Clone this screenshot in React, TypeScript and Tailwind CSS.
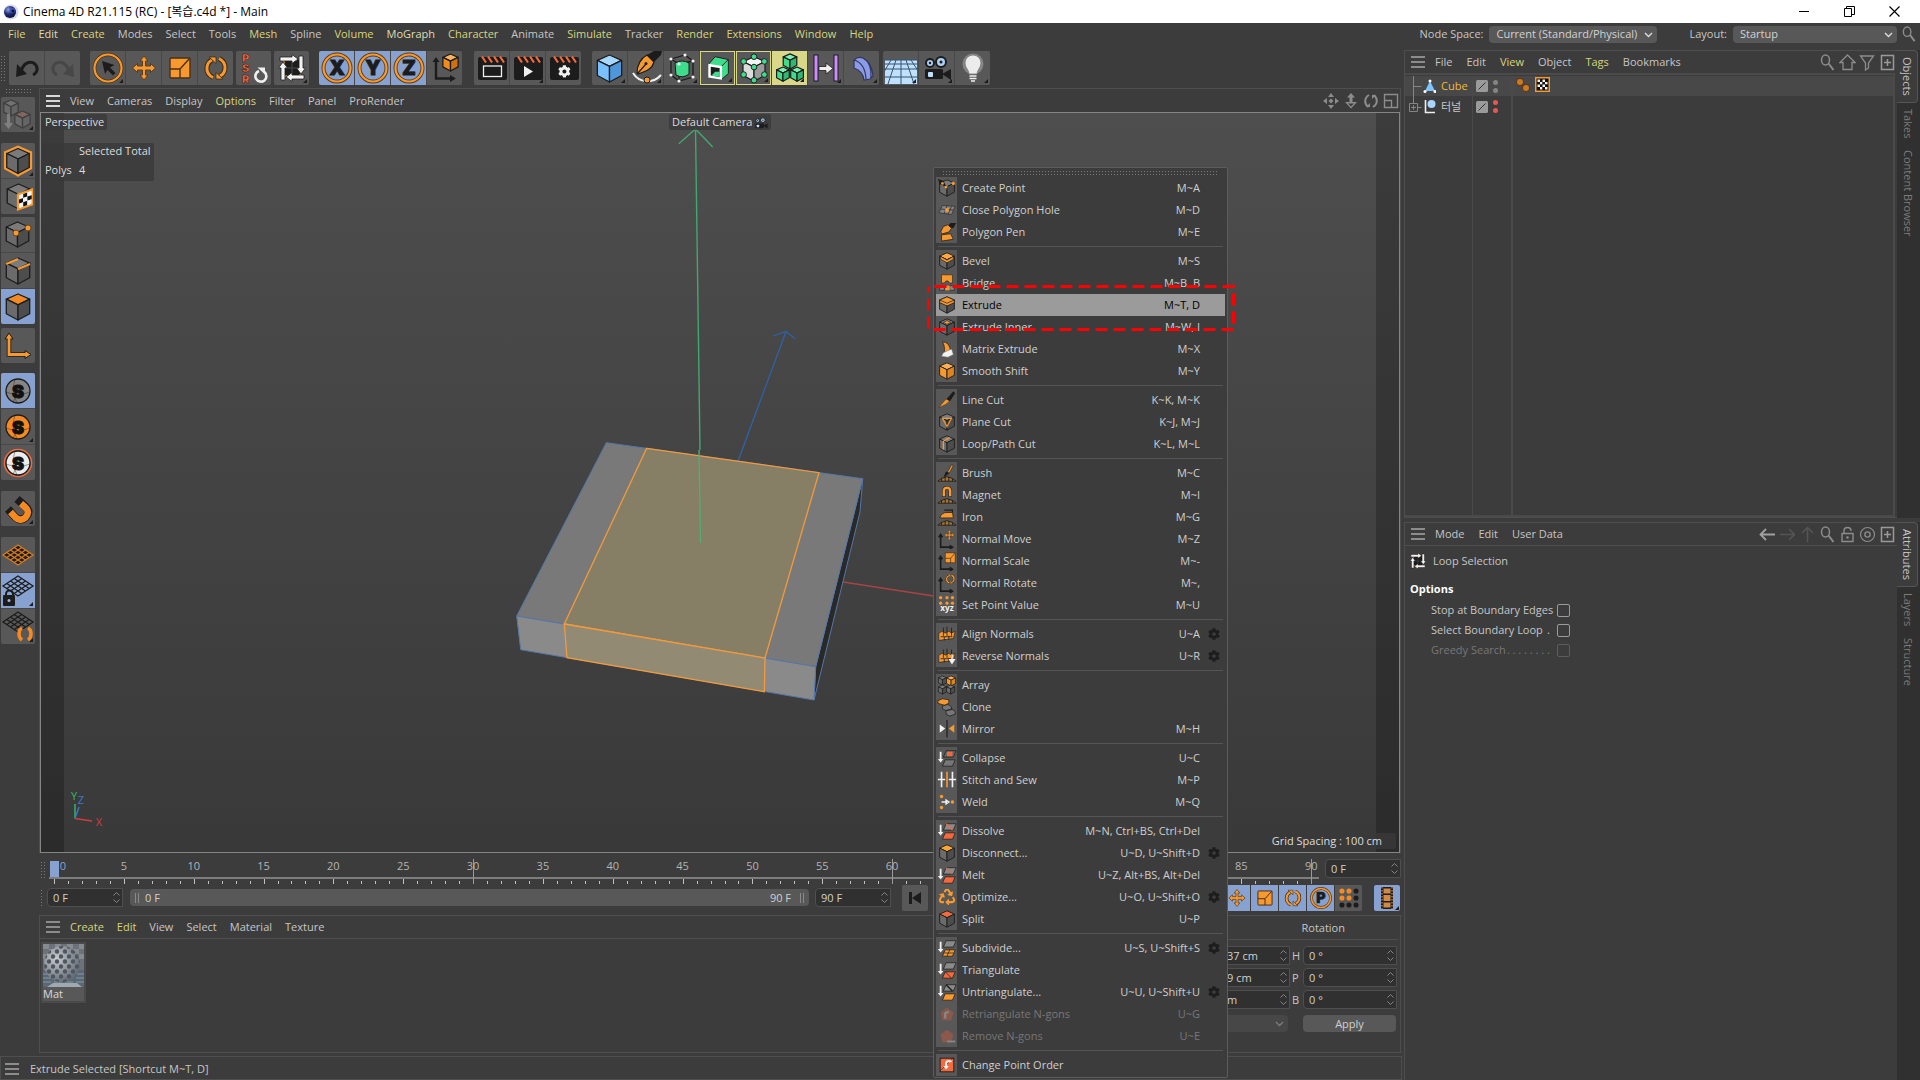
import React from 'react';
import type { ReactNode } from 'react';
import { FaCog, FaRecycle } from 'react-icons/fa';

const O = '#f7992f';
const K = '#1c1c1c';
const G = '#3fdc8b';
const R = '#f26a3d';

/* ---------- shared drawings, 34 x 34 ---------- */

function Svg({ children, size = 34, box = 34 }: { children: ReactNode; size?: number; box?: number }) {
  return (
    <svg width={size} height={size} viewBox={`0 0 ${box} ${box}`} fill="none" aria-hidden="true">
      {children}
    </svg>
  );
}

function Iso({ x = 5, y = 5, s = 24, top = '#7b7b7b', left = '#6b6b6b', right = '#4d4d4d', line = K, w = 1.3 }: {
  x?: number; y?: number; s?: number; top?: string; left?: string; right?: string; line?: string; w?: number;
}) {
  const p = (a: number, b: number) => `${x + a * s},${y + b * s}`;
  return (
    <g stroke={line} strokeWidth={w} strokeLinejoin="round">
      <polygon points={`${p(0.5, 0)} ${p(0.95, 0.2)} ${p(0.5, 0.42)} ${p(0.05, 0.2)}`} fill={top} />
      <polygon points={`${p(0.05, 0.2)} ${p(0.5, 0.42)} ${p(0.5, 1)} ${p(0.05, 0.76)}`} fill={left} />
      <polygon points={`${p(0.95, 0.2)} ${p(0.5, 0.42)} ${p(0.5, 1)} ${p(0.95, 0.76)}`} fill={right} />
    </g>
  );
}

const MovePath = () => (
  <path
    d="M17 5l4 5h-2.500v5h5v-2.500l5 4.500-5 4.500v-2.500h-5v5h2.500L17 29l-4-5h2.500v-5h-5v2.500L5.500 17l5-4.500v2.500h5v-5H13z"
    fill={O} stroke="#5b3c1a" strokeWidth="1" />
);
const ScalePath = () => (
  <g stroke="#4a3016" strokeWidth="1.400">
    <rect x="7" y="7" width="20" height="20" rx="1" fill={O} />
    <path d="M7 18h10v9M17 18L27 7" />
  </g>
);
const RotatePath = () => (
  <g>
    <path d="M14 26.500C9 24 7.500 20 8 16c.4-3 2-5.500 5-7" stroke="#3b2a18" strokeWidth="5" />
    <path d="M20 7.500c5 2.500 6.500 6.500 6 10.500-.4 3-2 5.500-5 7" stroke="#3b2a18" strokeWidth="5" />
    <path d="M14 26.500C9 24 7.500 20 8 16c.4-3 2-5.500 5-7" stroke={O} strokeWidth="3" />
    <path d="M20 7.500c5 2.500 6.500 6.500 6 10.500-.4 3-2 5.500-5 7" stroke={O} strokeWidth="3" />
    <path d="M10 6h7v6.500zM24 28h-7v-6.500z" fill={O} stroke="#3b2a18" strokeWidth=".8" />
  </g>
);
const LoopPath = () => (
  <g>
    <rect x="9" y="9" width="16" height="16" fill={K} stroke={O} strokeWidth="1.500" strokeDasharray="3 2" />
    <path d="M17 9v16M9 17h16" stroke="#4a4a4a" strokeWidth="1" />
    <g fill="#f2f2f2" stroke={K} strokeWidth=".8">
      <path d="M5 6h12V3.500l6 4.500-6 4.500V10H5z" />
      <path d="M28 5v12h2.500L26 23l-4.500-6H24V5z" />
      <path d="M29 28H17v2.500L11 26l6-4.500V24h12z" />
      <path d="M6 29V17H3.500L8 11l4.500 6H10v12z" />
    </g>
  </g>
);
const AxisLetter = ({ c }: { c: string }) => (
  <g>
    <circle cx="17" cy="17" r="13.500" stroke="#5b3c1a" strokeWidth="4" />
    <circle cx="17" cy="17" r="13.500" stroke={O} strokeWidth="2.200" />
    <text x="17" y="24" textAnchor="middle" fontSize="20" fontWeight="900" fill={K} stroke={K} strokeWidth=".8" fontFamily="Inter, sans-serif">{c}</text>
  </g>
);
const Clap = ({ children }: { children: ReactNode }) => (
  <g>
    <rect x="3" y="6" width="29" height="23" rx="2" fill={K} />
    <path d="M7 5.500l4 6M13 5.500l4 6M19 5.500l4 6M25 5.500l4 6" stroke={R} strokeWidth="2.200" />
    {children}
  </g>
);
const Camera = () => (
  <g>
    <circle cx="10" cy="12" r="4" fill="#a9d0f5" stroke={K} strokeWidth="2" />
    <circle cx="21" cy="11" r="5" fill="#a9d0f5" stroke={K} strokeWidth="2" />
    <circle cx="10" cy="12" r="1.200" fill={K} />
    <circle cx="21" cy="11" r="1.500" fill={K} />
    <rect x="5" y="18" width="18" height="10" rx="1.500" fill={K} />
    <path d="M22 23l9-5v11z" fill={K} />
    <rect x="8" y="21" width="5" height="5" rx="1" fill="#bfe0ff" />
  </g>
);
const Checks = ({ x, y, s, n = 4 }: { x: number; y: number; s: number; n?: number }) => (
  <g>
    {Array.from({ length: n * n }, (_, i) => {
      const c = i % n;
      const r = Math.floor(i / n);
      return <rect key={i} x={x + c * s} y={y + r * s} width={s} height={s} fill={(c + r) % 2 ? '#111' : '#f5f5f5'} />;
    })}
  </g>
);
const GridPlane = ({ c, y = 0 }: { c: string; y?: number }) => (
  <g stroke={c} strokeWidth="1.300" transform={`translate(0 ${y})`}>
    <path d="M17 7L32 17L17 27L2 17Z" />
    <path d="M13.200 9.500l15 10M9.500 12l15 10M5.800 14.500l15 10M20.800 9.500l-15 10M24.500 12l-15 10M28.200 14.500l-15 10" />
  </g>
);
const Axes = () => (
  <g>
    <path d="M8 9v18.500h15" stroke={K} strokeWidth="2.400" />
    <path d="M4.500 11L8 6l3.500 5zM22 24l6 3.500-6 3.500z" fill={K} />
  </g>
);
const SnapS = ({ fill, ring }: { fill: string; ring?: string }) => (
  <g>
    {ring && <circle cx="17" cy="17" r="13.500" stroke={ring} strokeWidth="1.600" />}
    <circle cx="17" cy="17" r="12" fill={fill} stroke={K} strokeWidth="1.300" />
    <path d="M5 18q12 5 24 0M14 5q-4 12 2 24M12 28q4-6 4-11" stroke={K} strokeOpacity=".4" />
    <text x="17" y="23.500" textAnchor="middle" fontSize="18" fontWeight="900" fill="#111" stroke="#111" strokeWidth="1" fontFamily="Inter, sans-serif">S</text>
  </g>
);

/* ---------- toolbars ---------- */

type Tool = { name: string; icon: ReactNode; on?: boolean; corner?: boolean; tint?: 'frame' | 'fill'; dim?: boolean };

const topGroups: { gap: string; tools: Tool[] }[] = [
  { gap: 'mr-2.5', tools: [
    { name: 'Undo', icon: <g><path d="M11 21C13 12 20 9 25 13c4 4 2 9-2 11" stroke={K} strokeWidth="3" /><path d="M6 26l1-13 10 10z" fill={K} /></g> },
    { name: 'Redo', icon: <g><path d="M23 21C21 12 14 9 9 13c-4 4-2 9 2 11" stroke="#474747" strokeWidth="3" /><path d="M28 26l-1-13-10 10z" fill="#474747" /></g> },
  ] },
  { gap: 'mr-[3px]', tools: [
    { name: 'Live Selection', corner: true, icon: <g><circle cx="17" cy="17" r="13.500" stroke="#4a3016" strokeWidth="3.500" /><circle cx="17" cy="17" r="13.500" stroke={O} strokeWidth="2.200" /><path d="M11 10l3 13 2.500-4 5.500 5.500 2.500-2.500-5.500-5.500 4.500-2.500z" fill={K} /></g> },
    { name: 'Move', icon: <MovePath /> },
    { name: 'Scale', icon: <ScalePath /> },
    { name: 'Rotate', icon: <RotatePath /> },
  ] },
  { gap: 'mr-[3px]', tools: [
    { name: 'Reset PSR', icon: (
      <g>
        <g fontSize="11" fontWeight="900" fill={R} stroke={K} strokeWidth=".5" fontFamily="Inter, sans-serif">
          <text x="5" y="11">P</text><text x="5" y="21">S</text><text x="5" y="32">R</text>
        </g>
        <path d="M22 20a5.500 5.500 0 1 0 5.500 1" stroke="#f0f0f0" strokeWidth="2.600" /><path d="M20.500 16.500h7.500v7z" fill="#f0f0f0" />
      </g>
    ) },
  ] },
  { gap: 'mr-2.5', tools: [{ name: 'Loop Selection', corner: true, icon: <LoopPath /> }] },
  { gap: 'mr-3', tools: [
    { name: 'X-Axis', on: true, icon: <AxisLetter c="X" /> },
    { name: 'Y-Axis', on: true, icon: <AxisLetter c="Y" /> },
    { name: 'Z-Axis', on: true, icon: <AxisLetter c="Z" /> },
    { name: 'Coordinate System', icon: <g><Axes /><Iso x={14} y={3} s={17} top="#ffb45c" left="#f28a1c" right="#cf7012" /></g> },
  ] },
  { gap: 'mr-[11px]', tools: [
    { name: 'Render View', icon: <Clap><rect x="8.500" y="15" width="18" height="10.500" stroke="#f0f0f0" strokeWidth="1.300" /></Clap> },
    { name: 'Render to Picture Viewer', corner: true, icon: <Clap><path d="M13 15v11l9-5.500z" fill="#f0f0f0" /></Clap> },
    { name: 'Edit Render Settings', icon: <Clap><g transform="translate(11 14) scale(.025)"><FaCog size={512} color="#f0f0f0" /></g></Clap> },
  ] },
  { gap: 'mr-1', tools: [
    { name: 'Cube', corner: true, icon: <Iso x={3} y={4} s={27} top="#a5d7ff" left="#78c0ff" right="#4f97d8" /> },
    { name: 'Pen', corner: true, icon: <g><path d="M18 4l7-4h8l-1 4-7 7z" fill={K} /><path d="M8 22C8 14 12 7 18 4l7 7c-2 7-7 9-16 12zM9 22l8-9" fill={O} stroke={K} strokeWidth="1.200" /><circle cx="17" cy="12.500" r="1.500" fill={K} /><path d="M4 22c6 10 20 11 28 2" stroke="#f0f0f0" strokeWidth="2" /><circle cx="18" cy="29" r="3" fill={O} stroke={K} /></g> },
    { name: 'Subdivision Surface', corner: true, icon: <g><path d="M6 8L20 4l8 6v16l-14 4-8-6zM6 8l8 5 14-3M14 13v17" stroke={K} strokeWidth="1.300" /><path d="M10 12q7-4 14 0v11q-6 5-13 1z" fill={G} stroke={K} />{[[6, 8], [20, 4], [28, 10], [28, 26], [14, 30], [6, 24], [14, 13]].map(([a, b]) => <circle key={`${a}-${b}`} cx={a} cy={b} r="1.600" fill="#f5f5f5" />)}</g> },
    { name: 'Extrude', corner: true, tint: 'frame', icon: <g><path d="M7 13l7-8 14 3v15l-7 6z" fill={G} stroke={K} /><path d="M21 15l7-7" stroke={K} /><path d="M8 14l12 2v12L8 26z" fill={K} stroke="#fff" strokeWidth="2.600" /><path d="M10 25l4-4h5v5.500z" fill={G} /></g> },
    { name: 'Volume Builder', corner: true, tint: 'frame', icon: <g><Iso x={4} y={5} s={26} top="#f5f5f5" left="#dcdcdc" right="#9b9b9b" />{[[17, 5], [6, 10], [28, 10], [17, 16], [6, 24], [28, 24], [17, 30]].map(([a, b], i) => <circle key={i} cx={a} cy={b} r="3" fill={G} stroke={K} />)}</g> },
    { name: 'MoGraph Cloner', corner: true, tint: 'fill', icon: <g><Iso x={9} y={2} s={16} top="#7bf0b3" left="#3fdc8b" right="#2fb872" /><Iso x={2} y={16} s={15} top="#7bf0b3" left="#3fdc8b" right="#2fb872" /><Iso x={17} y={16} s={15} top="#7bf0b3" left="#3fdc8b" right="#2fb872" /></g> },
    { name: 'Fields', corner: true, icon: <g><rect x="5" y="4" width="4" height="26" fill="#cf8cff" stroke={K} /><rect x="25" y="4" width="4" height="26" fill="#cf8cff" stroke={K} /><path d="M10 15.500h7V12l7 5.500-7 5.500v-3.500h-7z" fill="#f0f0f0" stroke={K} strokeWidth=".8" /></g> },
    { name: 'Bend', corner: true, icon: <path d="M9 9q4-4 9-2 9 5 10 18l-3 3-6 1Q18 20 9 17zM9 9q11 3 12 19M18 7q9 5 8 20" fill="#8c9be8" stroke="#30365c" strokeWidth="1.200" /> },
  ] },
  { gap: '', tools: [
    { name: 'Floor', corner: true, icon: <g><rect x="1" y="9" width="32" height="24" fill="#bfe0ff" /><path d="M0 9h34M0 13h34M0 18h34M0 26h34M17 9v24M12 9L4 33M22 9l8 24M7 9L-3 26M27 9l11 17" stroke="#39536e" strokeWidth="1" /></g> },
    { name: 'Camera', corner: true, icon: <Camera /> },
    { name: 'Light', corner: true, icon: <g><circle cx="17" cy="13" r="10.500" fill="#fff" fillOpacity=".28" /><path d="M13 23c0-4-4-6-4-11a8 8 0 0 1 16 0c0 5-4 7-4 11z" fill="#ececec" stroke="#777" strokeWidth=".8" /><path d="M13.500 25h7M13.500 27.500h7M15 30h4" stroke="#efefef" strokeWidth="1.600" /></g> },
  ] },
];

const sideGroups: { gap: string; tools: Tool[] }[] = [
  { gap: 'mb-[11px]', tools: [{ name: 'Make Editable', corner: true, dim: true, icon: <g><Iso x={2} y={2} s={16} top="#999" left="#888" right="#777" /><Iso x={13} y={13} s={17} top="#c77d64" left="#888" right="#777" /><path d="M6 16v9H3l4.500 6 4.500-6H9v-9z" fill="#bbb" /></g> }] },
  { gap: 'mb-[3px]', tools: [
    { name: 'Model', corner: true, icon: <g><Iso x={3} y={3} s={28} line={O} w={3} /><Iso x={4.5} y={4.5} s={25} /></g> },
    { name: 'Texture', icon: <g><Iso x={5} y={4} s={25} /><g transform="matrix(1 -.35 0 1 17 14.500)"><rect width="14" height="15" fill="#fff" stroke={O} strokeWidth="2.200" /><Checks x={1} y={1.2} s={4.2} n={3} /></g></g> },
  ] },
  { gap: 'mb-[4px]', tools: [
    { name: 'Points', icon: <g><Iso x={4} y={4} s={25} /><circle cx="15" cy="15" r="3" fill={O} stroke="#6b4215" /><circle cx="27" cy="10" r="3" fill={O} stroke="#6b4215" /></g> },
    { name: 'Edges', icon: <g><Iso x={4} y={4} s={26} /><path d="M5 10l12-5M17 15l12-5" stroke={O} strokeWidth="2" /></g> },
    { name: 'Polygons', on: true, icon: <Iso x={4} y={4} s={26} top="#f58a22" /> },
  ] },
  { gap: 'mb-[10px]', tools: [{ name: 'Enable Axis', icon: <g><path d="M8 9v16.500h17" stroke={K} strokeWidth="4.500" /><path d="M4 10l4-6 4 6zM24 21.500l6 4-6 4z" fill={O} stroke={K} /><path d="M8 9v16.500h17" stroke={O} strokeWidth="2.800" /></g> }] },
  { gap: 'mb-[11px]', tools: [
    { name: 'Enable Snap', on: true, icon: <SnapS fill="#858585" /> },
    { name: 'Snap Settings', corner: true, icon: <SnapS fill="#f58a22" /> },
    { name: 'Viewport Solo', icon: <SnapS fill="#ececec" ring={R} /> },
  ] },
  { gap: 'mb-[11px]', tools: [{ name: 'Soft Magnet', corner: true, icon: (
    <g>
      <path d="M7 17l7 8q6 5 11 0 5-6-1-11l-8-7" stroke={K} strokeWidth="8" />
      <path d="M9.500 20l5 5.500q5 4.500 10 0 5-5.500-.5-10.500l-4-3.500" stroke="#f58a22" strokeWidth="6.500" />
    </g>
  ) }] },
  { gap: '', tools: [
    { name: 'Workplane', icon: <g><path d="M17 7L32 17L17 27L2 17Z" fill={K} /><GridPlane c="#d97c20" /></g> },
    { name: 'Locked Workplane', on: true, corner: true, icon: <g><GridPlane c={K} y={-5} /><path d="M5 22v-2a3.500 3.500 0 0 1 7 0v2" stroke={K} strokeWidth="2" /><rect x="2" y="21" width="12" height="11" rx="1" fill={K} /><circle cx="8" cy="26.500" r="1.500" fill="#9fb4dc" /></g> },
    { name: 'Planar Workplane', corner: true, icon: <g><GridPlane c={K} y={-5} /><path d="M21 18c-4 2-4 9 0 12M27 18c4 2 4 9 0 12" stroke="#f58a22" strokeWidth="3.500" /></g> },
  ] },
];

function ToolButton({ t, side = false }: { t: Tool; side?: boolean }) {
  const bg = t.on ? 'bg-[#87a2d0]' : t.tint === 'fill' ? 'bg-[#d8d888]' : 'bg-[#585858]';
  const frame = t.tint ? 'border border-[#d8d888]' : '';
  return (
    <button type="button" aria-label={t.name} className={`relative flex items-center justify-center overflow-hidden ${side ? 'h-[35px] w-[34px]' : 'h-[34px] w-[35px]'} ${bg} ${frame}`}>
      <span className={t.dim ? 'opacity-40' : ''}><Svg size={t.tint ? 32 : 34}>{t.icon}</Svg></span>
      {t.corner && <span className="absolute right-0.5 bottom-0.5 border-b-4 border-l-4 border-b-[#1c1c1c] border-l-transparent" />}
    </button>
  );
}

const dotsV = 'bg-[radial-gradient(circle,#7a7a7a_1px,transparent_1px)] bg-[size:3px_3px]';

/* ---------- menus ---------- */

function MenuItems({ items }: { items: [string, string?][] }) {
  return (
    <>
      {items.map(([label, tone]) => (
        <button key={label} type="button" className={tone === 'y' ? 'text-[#d7d57c]' : tone === 'p' ? 'text-[#dedcb4]' : 'text-[#c6c6c6]'}>{label}</button>
      ))}
    </>
  );
}

const Burger = ({ bright = false }: { bright?: boolean }) => (
  <button type="button" aria-label="Panel menu" className="flex w-3.5 flex-col gap-[3px]">
    {[0, 1, 2].map((i) => <span key={i} className={`h-[2px] w-full ${bright ? 'bg-[#d8d8d8]' : 'bg-[#8c8c8c]'}`} />)}
  </button>
);

const PickLens = ({ size = 17 }: { size?: number }) => (
  <Svg size={size} box={17}><ellipse cx="6.500" cy="6" rx="4" ry="5" stroke="#8c8c8c" strokeWidth="1.500" /><path d="M9.500 9.500l5 6.500" stroke="#8c8c8c" strokeWidth="2" /></Svg>
);
const PlusBox = () => <Svg size={17} box={17}><path d="M2.500 1.500h12v14h-12zM8.500 5v7M5 8.500h7" stroke="#9a9a9a" strokeWidth="1.500" /></Svg>;

/* ---------- context menu icons, 22 x 22 ---------- */

const Plate = ({ x, y, c, w = 12 }: { x: number; y: number; c: string; w?: number }) => (
  <path d={`M${x + 3} ${y}h${w - 3}l-3 7h-${w - 3}z`} fill={c} stroke={K} strokeWidth=".8" />
);
const Down = () => <path d="M3 4v8H1l3 4 3-4H5V4z" fill="#f2f2f2" />;
const Hill = () => <path d="M1 20l4-3 6-2 6 2 4 3zM5 17v3M9 15.500V20M13 15.500V20M17 17v3" fill="#a8742f" stroke={K} strokeWidth="1" />;
const MiniAxes = () => <path d="M4 7v13h12M2 9l2-3 2 3M14 18l3 2-3 2" stroke={K} strokeWidth="1.800" />;
const Two = ({ a, b, slash }: { a: string; b: string; slash?: string }) => (
  <g><Down /><Plate x={7} y={3} c={a} w={14} /><Plate x={6} y={13} c={b} w={14} />{slash && <path d="M10 3l7 7" stroke={slash} strokeWidth="1.500" />}</g>
);
const Cube22 = (p: { top?: string; left?: string; right?: string }) => <Iso x={2} y={2} s={18} w={1} {...p} />;
const Quill = () => <g><path d="M11 5l4-4h6l-3 6z" fill={K} /><path d="M4 11l3-6 5-2 4 4-3 4-7 2z" fill={O} stroke={K} strokeWidth=".8" /></g>;
const Normals = () => <g><path d="M2 10l4-2 3 2 4-2 3 2 4-2-2 8-16 2z" fill={O} stroke={K} strokeWidth=".7" /><path d="M7 4v9M11 3v10M16 4v9M4 14h13M8 14v4M13 13v4" stroke={K} strokeWidth=".9" /></g>;
const Tiny = ({ x, y, children }: { x: number; y: number; children: ReactNode }) => <g transform={`translate(${x} ${y}) scale(.45)`}>{children}</g>;

type Entry = [name: string, keys: string, icon: ReactNode, gear?: boolean, off?: boolean];

const groups: Entry[][] = [
  [
    ['Create Point', 'M~A', <g><Cube22 /><path d="M1 1l6 2 3 6-7-2z" fill={K} /><circle cx="6" cy="6" r="1.500" fill={O} /><circle cx="18" cy="6" r="1.800" fill={O} /><circle cx="10" cy="10" r="1.600" fill={O} /></g>],
    ['Close Polygon Hole', 'M~D', <g><path d="M6 6l14 1-4 9-14-2z" fill="#858585" stroke="#393939" /><path d="M4 10l14 1M11 6l-3 9M16 7l-4 9" stroke="#393939" /><rect x="9" y="9" width="4" height="4" fill={O} /></g>],
    ['Polygon Pen', 'M~E', <g><Quill /><path d="M5 14l10-1 3 6-13 2z" fill={O} stroke={K} strokeWidth=".8" /></g>],
  ],
  [
    ['Bevel', 'M~S', <g><Cube22 top="#ffa940" /><path d="M4 6l7 4 7-4v3l-7 4-7-4z" fill={O} stroke={K} strokeWidth=".7" /></g>],
    ['Bridge', 'M~B, B', <g><path d="M5 2h12v9h-3q-3-5-6 0H5z" fill={O} stroke={K} strokeWidth=".6" /><path d="M3 14h5v5H3zM14 14h5v5h-5z" fill="#8a8a8a" stroke={K} strokeWidth=".7" /><path d="M9 14h5v5H9z" fill={O} /></g>],
    ['Extrude', 'M~T, D', <g><Cube22 /><path d="M11 2l8 3.500v3L11 12 3 8.500v-3z" fill={O} stroke={K} strokeWidth=".9" /><path d="M3 5.500L11 9l8-3.500" stroke={K} strokeWidth=".8" /></g>],
    ['Extrude Inner', 'M~W, I', <g><Cube22 /><path d="M11 4l4 2-4 2-4-2z" fill={O} stroke={K} strokeWidth=".6" /></g>],
    ['Matrix Extrude', 'M~X', <g><path d="M6 3q8 0 9 11l-8 4q3-8-1-15z" fill={O} stroke={K} strokeWidth=".8" /><path d="M7 15l9-4 2 6-6 3-7-1z" fill="#f2f2f2" stroke="#777" strokeWidth=".6" /></g>],
    ['Smooth Shift', 'M~Y', <Cube22 top="#ffb057" left={O} right="#dd8420" />],
  ],
  [
    ['Line Cut', 'K~K, M~K', <g><path d="M11 10l7-8 1.500 1.500L14 12z" fill={K} stroke={K} /><path d="M2 19l8-9 4 2q-4 5-12 7z" fill={O} stroke={K} strokeWidth=".5" /></g>],
    ['Plane Cut', 'K~J, M~J', <g><Cube22 /><path d="M6 7h10l-5 9z" stroke={O} strokeWidth="1.200" /></g>],
    ['Loop/Path Cut', 'K~L, M~L', <g><Cube22 /><path d="M14 4L7 8v9" stroke={O} strokeWidth="1.500" /></g>],
  ],
  [
    ['Brush', 'M~C', <g><Hill /><path d="M11 11l5-9 2 1-5 9z" fill={O} stroke={K} strokeWidth=".7" /><path d="M8 15l2-5 3 1z" fill={K} stroke={K} /></g>],
    ['Magnet', 'M~I', <g><Hill /><path d="M7.500 13V7q0-4 3.500-4t3.500 4v6" stroke={K} strokeWidth="4" /><path d="M7.500 12.500V7q0-4 3.500-4t3.500 4v5.500" stroke={O} strokeWidth="2.800" /></g>],
    ['Iron', 'M~G', <g><Hill /><path d="M3 12q2-6 8-6h6l1 6z" fill={O} stroke={K} strokeWidth=".8" /><path d="M8 3.500h9V6" stroke={K} strokeWidth="1.300" /></g>],
    ['Normal Move', 'M~Z', <g><MiniAxes /><Tiny x={6} y={-1}><MovePath /></Tiny></g>],
    ['Normal Scale', 'M~-', <g><MiniAxes /><rect x="9" y="2" width="11" height="11" fill={O} stroke="#4a3016" strokeWidth=".8" /><path d="M9 8h6v5M15 8l5-6" stroke="#4a3016" strokeWidth=".8" /></g>],
    ['Normal Rotate', 'M~,', <g><MiniAxes /><Tiny x={7} y={-1}><RotatePath /></Tiny></g>],
    ['Set Point Value', 'M~U', <g>{[4, 11, 17].map((x) => <g key={x}><circle cx={x} cy="3" r="1.800" fill={O} /><circle cx={x} cy="9" r="1.800" fill={O} /></g>)}<text x="11" y="18" textAnchor="middle" fontSize="9" fontWeight="700" fill="#f0f0f0">xyz</text></g>],
  ],
  [
    ['Align Normals', 'U~A', <Normals />, true],
    ['Reverse Normals', 'U~R', <g><Normals /><path d="M16.500 9v8M14 15l2.500 4 2.500-4z" stroke="#f2f2f2" fill="#f2f2f2" strokeWidth="1.500" /></g>, true],
  ],
  [
    ['Array', '', <g><Iso x={1} y={1} s={10} w={0.8} /><Iso x={10} y={1} s={11} w={0.8} top="#ffb057" left={O} right="#dd8420" /><Iso x={1} y={11} s={10} w={0.8} /><Iso x={10} y={11} s={10} w={0.8} /></g>],
    ['Clone', '', <g><path d="M6 10l6-2 4 3v3l-6 1-4-2zM10 15l6-2 4 3v3l-6 2-4-2z" fill="#777" stroke={K} strokeWidth=".8" /><path d="M1 4l5-2 7 1v4l-5 2-7-2z" fill={O} stroke={K} strokeWidth=".8" /></g>],
    ['Mirror', 'M~H', <g><path d="M11 1v19" stroke={K} strokeWidth="1.300" /><path d="M3 6v9l6-4.500z" fill="#f2f2f2" /><path d="M19 6v9l-6-4.500z" fill={O} /></g>],
  ],
  [
    ['Collapse', 'U~C', <g><Two a="#666" b="#777" /><rect x="11" y="4" width="6" height="5" fill={R} /></g>],
    ['Stitch and Sew', 'M~P', <g><path d="M11 2v17" stroke={O} strokeWidth="1.800" /><path d="M5 2v6M5 13v6M17 2v6M17 13v6M1 10.500h8M13 10.500h8M5 8v5M17 8v5" stroke="#f0f0f0" strokeWidth="1.800" /></g>],
    ['Weld', 'M~Q', <g><path d="M5 11h6M10 9l3 2-3 2z" stroke="#f0f0f0" strokeWidth="1.600" /><circle cx="5" cy="5" r="1.900" fill={O} /><circle cx="5" cy="17" r="1.900" fill={O} /><circle cx="17" cy="11" r="1.900" fill={O} /></g>],
  ],
  [
    ['Dissolve', 'M~N, Ctrl+BS, Ctrl+Del', <Two a="#8a8a8a" b={R} slash={R} />],
    ['Disconnect...', 'U~D, U~Shift+D', <Cube22 top="#ffa62e" />, true],
    ['Melt', 'U~Z, Alt+BS, Alt+Del', <Two a="#8a8a8a" b={R} slash="#c2755a" />],
    ['Optimize...', 'U~O, U~Shift+O', <g transform="translate(2 2)"><FaRecycle size={18} color={O} /></g>, true],
    ['Split', 'U~P', <Cube22 top={R} />],
  ],
  [
    ['Subdivide...', 'U~S, U~Shift+S', <g><Two a="#8a8a8a" b={O} /><path d="M8 16.500h10M14 13l-3 7" stroke={K} strokeWidth=".8" /></g>, true],
    ['Triangulate', '', <g><Two a="#8a8a8a" b={R} /><path d="M9 13l7 7" stroke={K} strokeWidth=".8" /></g>],
    ['Untriangulate...', 'U~U, U~Shift+U', <Two a="#8a8a8a" b={O} slash={K} />, true],
    ['Retriangulate N-gons', 'U~G', <g><path d="M11 4l7 5-2 9H6L4 9z" fill="#8a594c" /><path d="M9 16v-5q0-2 4-2" stroke="#888" strokeWidth="2.500" /></g>, false, true],
    ['Remove N-gons', 'U~E', <g><path d="M11 4l7 5-2 9H6L4 9z" fill="#8a594c" /><path d="M11 17h9" stroke="#888" strokeWidth="2" /></g>, false, true],
  ],
  [
    ['Change Point Order', '', <g><rect x="3.500" y="3.500" width="15" height="15" fill={R} stroke={K} /><path d="M3 18L18 3" stroke={K} strokeWidth=".6" /><path d="M16 7h-4q-2 0-2 3v3" stroke="#f2f2f2" strokeWidth="2.200" /><path d="M7 12h6l-3 4z" fill="#f2f2f2" /></g>],
  ],
];

function ContextMenu() {
  return (
    <div className="absolute top-[167px] left-[933px] w-[295px] rounded-xs border border-[#5c5c5c] bg-[#3c3c3c] px-[2px]">
      <div className={`mx-1.5 mt-[2px] mb-[2px] h-[5px] ${dotsV}`} />
      <ul role="menu">
        {groups.map((g, gi) => (
          <li key={gi} role="none">
            {gi > 0 && <div className="mx-0.5 mt-[3px] mb-[3px] h-px bg-[#555]" />}
            <ul role="none">
              {g.map(([name, keys, icon, gear, off]) => {
                const hot = name === 'Extrude';
                return (
                  <li key={name} role="none">
                    <button type="button" role="menuitem" disabled={off} className={`flex h-[22px] w-full items-center ${hot ? 'bg-[#9b9b9b] text-black' : off ? 'text-[#777]' : 'text-[#cfcfcf]'}`}>
                      <span className={`flex h-[22px] w-[21px] items-center justify-center ${hot ? '' : 'bg-[#585858]'}`}><Svg size={20} box={22}>{icon}</Svg></span>
                      <span className="ml-[5px] flex-1 text-left">{name}</span>
                      <span>{keys}</span>
                      <span className="flex w-[25px] justify-end pr-[5px]">{gear && <FaCog size={12} color="#1d1d1d" aria-label="Options" />}</span>
                    </button>
                  </li>
                );
              })}
            </ul>
          </li>
        ))}
      </ul>
      <div className="h-[1px]" />
      <svg className="pointer-events-none absolute -top-[1px] -left-[7px] h-[170px] w-[310px]" fill="none" aria-hidden="true">
        <rect x="1.500" y="119.500" width="305" height="43" stroke="#f00" strokeWidth="3" strokeDasharray="12 6" strokeDashoffset="-6" />
      </svg>
    </div>
  );
}

/* ---------- fields ---------- */

function NumField({ label, value, className }: { label: string; value: string; className: string }) {
  return (
    <span className={`flex h-[19px] items-center rounded-l-sm border border-[#4f4f4f] bg-[#303030] ${className}`}>
      <input aria-label={label} defaultValue={value} className="w-0 min-w-0 flex-1 bg-transparent pl-[5px] text-[#d0d0d0] outline-none" />
      <svg width="9" height="13" viewBox="0 0 9 13" fill="none" className="mr-[1px]" aria-hidden="true"><path d="M1.500 4.500l3-3 3 3M1.500 8.500l3 3 3-3" stroke="#858585" /></svg>
    </span>
  );
}

function Chevron({ c = '#dcdcdc' }: { c?: string }) {
  return <svg width="9" height="6" viewBox="0 0 9 6" fill="none" className="pointer-events-none absolute top-1.5 right-1" aria-hidden="true"><path d="M1 1l3.500 3.500L8 1" stroke={c} strokeWidth="1.400" /></svg>;
}

/* ---------- viewport ---------- */

function Scene() {
  return (
    <svg className="absolute inset-0 h-full w-full" fill="none" aria-label="Perspective view of the cube">
      <g transform="translate(-41 -113)">
        <path d="M678.800 143.700L695.500 129L712.700 147M695.500 129L700 450" stroke="#44a671" strokeWidth="1.400" />
        <path d="M738 461L786 331.500M773 336L786 331.500L795 338.500" stroke="#2f62a8" strokeWidth="1.300" />
        <path d="M840 581.500L933.500 596" stroke="#a84444" strokeWidth="1.300" />
        <g stroke="#5577a8" strokeWidth="1">
          <path d="M862.700 478.700L860 512L814 700L815.700 666.700Z" fill="#292929" />
          <path d="M606.300 442.700L862.700 478.700L815.700 666.700L516.700 616Z" fill="#797979" />
          <path d="M516.700 616L815.700 666.700L814 700L520.700 649.700Z" fill="#8a8a8a" />
        </g>
        <g stroke="#f29a3c" strokeWidth="1.300">
          <path d="M646.700 448.300L819 472.700L765 658L564.300 624Z" fill="#877e66" />
          <path d="M564.300 624L765 658L764.300 691.700L567 657.700Z" fill="#938a74" />
        </g>
        <path d="M699 450L700.500 543" stroke="#4fae72" strokeWidth="1.400" />
        <path d="M75 818.500V804" stroke="#37b96c" strokeWidth="1.400" />
        <path d="M75 818.500L79 807" stroke="#3a78c8" strokeWidth="1.400" />
        <path d="M75 818.500L92 821" stroke="#d23c3c" strokeWidth="1.600" />
        <g fontSize="11" textAnchor="middle">
          <text x="74" y="800" fill="#37b96c">Y</text>
          <text x="81" y="804" fill="#3a78c8">Z</text>
          <text x="99" y="826" fill="#d23c3c">X</text>
        </g>
      </g>
    </svg>
  );
}

function Viewport() {
  const tag = 'absolute rounded-xs bg-[#3a3a3a]/80 text-[#dcdcdc] leading-4';
  return (
    <main className="relative flex min-h-0 flex-1 overflow-hidden border border-[#858585] bg-linear-to-b from-[#4e4e4e] to-[#393939]">
      <div className="w-[23px] bg-black/23" />
      <div className="flex-1" />
      <div className="w-[23px] bg-black/23" />
      <Scene />
      <span className={`${tag} top-[1px] left-[1px] px-[3px]`}>Perspective</span>
      <div className={`${tag} top-[30px] left-[1px] h-[38px] w-[112px]`}>
        <div className="ml-[37px]">Selected Total</div>
        <div className="mt-[3px] ml-[3px] flex"><span className="w-[34px]">Polys</span><span>4</span></div>
      </div>
      <span className={`${tag} top-[1px] left-[628px] flex items-center gap-[1px] px-[3px]`}>Default Camera <Svg size={15} box={32}><Camera /></Svg></span>
      <span className={`${tag} right-[3px] bottom-[3px] pr-[14px] pl-[3px]`}>Grid Spacing : 100 cm</span>
    </main>
  );
}

function Ruler() {
  return (
    <div className="relative mt-[5px] flex h-[21px] flex-1 justify-between border-b-2 border-[#7d7d7d] pr-1.5 pl-[5px]">
      <span className="absolute bottom-0 left-[1px] h-[16px] w-[9px] bg-[#87a2d0]" />
      {Array.from({ length: 91 }, (_, f) => (
        <span key={f} className="relative w-px">
          <i className={`absolute w-px ${f % 30 === 0 && f > 0 ? 'top-[1px] h-[25px] bg-[#9a9a9a]' : f % 5 === 0 ? 'top-[21px] h-[5px] bg-[#c0c0c0]' : 'top-[23px] h-[3px] bg-[#c0c0c0]'}`} />
          {f % 5 === 0 && <span className={`absolute top-0 text-center ${f === 0 ? 'left-[5px] w-2 text-[#87a2d0]' : '-left-2.5 w-5 text-[#b4b4b4]'}`}>{f}</span>}
        </span>
      ))}
    </div>
  );
}

const playButtons: [string, ReactNode, string][] = [
  ['Record Position', <MovePath key="m" />, 'bg-[#87a2d0]'],
  ['Record Scale', <ScalePath key="s" />, 'bg-[#87a2d0]'],
  ['Record Rotation', <RotatePath key="r" />, 'bg-[#87a2d0]'],
  ['Record Parameter', <AxisLetter key="p" c="P" />, 'bg-[#87a2d0]'],
  ['Record Point Level', <g key="d">{[0, 1, 2].map((r) => [0, 1, 2].map((c) => <circle key={`${r}${c}`} cx={7 + c * 10} cy={7 + r * 10} r="3.600" fill={r < 2 && c < 2 ? '#f58a22' : K} />))}</g>, 'bg-[#585858]'],
];

function Tabs({ items }: { items: string[] }) {
  return (
    <div className="flex w-[23px] flex-col bg-[#303030] pr-0.5">
      {items.map((t, i) => (
        <button key={t} type="button" className={`flex justify-center py-[6px] ${i === 0 ? 'rounded-r-sm border-y border-r border-[#555] bg-[#3c3c3c] text-[#c4c4c4]' : 'text-[#7c7c7c]'}`}>
          <span className="[writing-mode:vertical-rl]">{t}</span>
        </button>
      ))}
    </div>
  );
}

const tick = 'size-[13px] appearance-none rounded-xs border';

export default function App() {
  return (
    <div className="relative flex h-screen min-h-[1080px] w-full flex-col overflow-hidden bg-[#3c3c3c] font-['Open_Sans','Noto_Sans_CJK_KR',sans-serif] text-[11px] leading-4 text-[#c6c6c6]">
      <header className="flex h-[23px] shrink-0 items-center bg-white text-xs text-black">
        <svg width="18" height="18" viewBox="0 0 18 18" className="ml-[2px]" aria-hidden="true">
          <defs><radialGradient id="orb" cx=".35" cy=".3" r=".8"><stop offset="0" stopColor="#8ea2dd" /><stop offset=".5" stopColor="#1e2a72" /><stop offset="1" stopColor="#080c2c" /></radialGradient></defs>
          <circle cx="9" cy="9" r="7.500" fill="#d9dbe4" /><circle cx="8" cy="9" r="6" fill="url(#orb)" /><circle cx="10.500" cy="7.500" r="2.800" fill="#3d53b8" /><circle cx="11" cy="8" r="1.500" fill="#0a0f38" />
        </svg>
        <h1 className="ml-[3px] flex-1">Cinema 4D R21.115 (RC) - [복습.c4d *] - Main</h1>
        <button type="button" aria-label="Minimize" className="w-[45px]"><svg width="11" height="11" className="mx-auto" aria-hidden="true"><path d="M0 5.500h10" stroke="#000" /></svg></button>
        <button type="button" aria-label="Restore" className="w-[45px]"><svg width="11" height="11" fill="none" className="mx-auto" aria-hidden="true"><path d="M.5 2.500h7v8h-7zM2.500 2.500v-2h8v8h-3" stroke="#000" /></svg></button>
        <button type="button" aria-label="Close" className="mr-[3px] w-[45px]"><svg width="11" height="11" className="mx-auto" aria-hidden="true"><path d="M.5.5l10 10M10.500.5l-10 10" stroke="#000" strokeWidth="1.200" /></svg></button>
      </header>

      <nav className="flex h-[22px] shrink-0 items-center gap-[13px] pr-[3px] pl-2">
        <MenuItems items={[['File', 'y'], ['Edit', 'p'], ['Create', 'y'], ['Modes'], ['Select'], ['Tools'], ['Mesh', 'y'], ['Spline'], ['Volume', 'y'], ['MoGraph', 'p'], ['Character', 'y'], ['Animate'], ['Simulate', 'y'], ['Tracker'], ['Render', 'y'], ['Extensions', 'y'], ['Window', 'y'], ['Help', 'y']]} />
        <div className="ml-auto flex items-center">
          <label htmlFor="space" className="mr-1.5">Node Space:</label>
          <span className="relative mr-[32px]">
            <select id="space" className="h-[17px] w-[168px] appearance-none rounded-sm bg-[#585858] pl-[7px] text-[#d2d2d2]"><option>Current (Standard/Physical)</option></select>
            <Chevron />
          </span>
          <label htmlFor="layout" className="mr-1.5">Layout:</label>
          <span className="relative mr-1">
            <select id="layout" className="h-[17px] w-[164px] appearance-none rounded-sm bg-[#585858] pl-[7px] text-[#d2d2d2]"><option>Startup</option></select>
            <Chevron />
          </span>
          <button type="button" aria-label="Search"><PickLens size={16} /></button>
        </div>
      </nav>

      <div className="mt-[5px] flex min-h-0 flex-1">
        <div className="mr-[2px] flex min-w-0 flex-1 flex-col">
          <div className="flex h-[38px] shrink-0 items-start pt-px">
            <span className={`mt-1 mr-1 h-7 w-[5px] ${dotsV}`} />
            {topGroups.map((g, i) => (
              <div key={i} className={`flex gap-px overflow-hidden rounded-xs bg-[#484848] ${g.gap}`}>
                {g.tools.map((t) => <ToolButton key={t.name} t={t} />)}
              </div>
            ))}
          </div>

          <div className="flex min-h-0 flex-1">
            <aside className="flex w-[39px] shrink-0 flex-col pl-px">
              <span className={`mb-1 ml-1 h-[5px] w-7 ${dotsV}`} />
              {sideGroups.map((g, i) => (
                <div key={i} className={`flex w-[34px] flex-col gap-px overflow-hidden rounded-xs bg-[#484848] ${g.gap}`}>
                  {g.tools.map((t) => <ToolButton key={t.name} t={t} side />)}
                </div>
              ))}
            </aside>

            <div className="flex min-w-0 flex-1 flex-col">
              <section className="mr-px flex min-h-0 flex-1 flex-col border border-b-0 border-[#4e4e4e]">
                <div className="flex h-[23px] shrink-0 items-center gap-[13px] pl-1.5">
                  <span className="-mr-[3px]"><Burger bright /></span>
                  <MenuItems items={[['View'], ['Cameras'], ['Display'], ['Options', 'y'], ['Filter'], ['Panel'], ['ProRender']]} />
                  <div className="mr-[1px] ml-auto flex gap-1">
                    <button type="button" aria-label="Pan"><Svg size={16} box={16}><path d="M8 0l3 4H5zM8 16l3-4H5zM0 8l4-3v6zM16 8l-4-3v6z" fill="#8c8c8c" /><path d="M8 5.500L10.500 8 8 10.500 5.500 8z" fill="#8c8c8c" /></Svg></button>
                    <button type="button" aria-label="Zoom"><Svg size={16} box={16}><path d="M8 0l4 4.500H9.500V9H14l-6 6.500L2 9h4.500V4.500H4z" fill="#8c8c8c" /><path d="M5 10.500h6L8 13.500z" fill="#3c3c3c" /></Svg></button>
                    <button type="button" aria-label="Orbit"><Svg size={16} box={16}><path d="M6 2C1 5 1 11 5.500 14M10 14c5-3 5-9 .5-12" stroke="#8c8c8c" strokeWidth="2" /><path d="M3 14h4v-4zM13 2H9v4z" fill="#8c8c8c" /></Svg></button>
                    <button type="button" aria-label="Toggle view"><Svg size={16} box={16}><path d="M1.500 1.500h13v13h-13zM1.500 7.500h7v7" stroke="#8c8c8c" strokeWidth="1.400" /></Svg></button>
                  </div>
                </div>
                <Viewport />
              </section>

              <div className="flex h-[29px] shrink-0">
                <span className={`mt-2 mr-[4px] ml-px h-[18px] w-[5px] ${dotsV}`} />
                <Ruler />
                <div className="mt-1.5 mr-[1px] ml-1.5"><NumField label="Current frame" value="0 F" className="w-[76px]" /></div>
              </div>

              <div className="flex h-[33px] shrink-0 items-start pt-[3px]">
                <span className={`mt-1 mr-[3px] ml-px h-[19px] w-[4px] ${dotsV}`} />
                <div className="mt-[3px]"><NumField label="Start frame" value="0 F" className="w-[76px]" /></div>
                <div className="mt-1 ml-[7px] flex h-[17px] w-[679px] items-center justify-between rounded-sm bg-[#585858] px-[5px] text-[#d0d0d0]">
                  <span className="flex items-center gap-[6px]"><i className="h-2.5 w-1 border-x border-[#8a8a8a]" />0 F</span>
                  <span className="flex items-center gap-[9px]">90 F<i className="h-2.5 w-1 border-x border-[#8a8a8a]" /></span>
                </div>
                <div className="mt-[3px] ml-1.5"><NumField label="End frame" value="90 F" className="w-[76px]" /></div>
                <button type="button" aria-label="Go to start" className="ml-[11px] flex size-[26px] items-center justify-center rounded-xs bg-[#585858]"><Svg size={16} box={16}><path d="M2 2h3v12H2zM14 2v12L5 8z" fill={K} /></Svg></button>
                <div className="ml-auto flex gap-px overflow-hidden rounded-xs">
                  {playButtons.map(([n, icon, bg]) => <button key={n} type="button" aria-label={n} className={`flex h-[26px] w-[27px] items-center justify-center ${bg}`}><Svg size={24}>{icon}</Svg></button>)}
                </div>
                <button type="button" aria-label="Timeline" className="relative mr-[2px] ml-3 flex size-[26px] items-center justify-center rounded-xs bg-[#87a2d0]">
                  <Svg size={24} box={24}><rect x="6" y="1" width="12" height="22" fill={K} /><path d="M8.500 2.500h7v5h-7zM8.500 9h7v6h-7zM8.500 16.500h7v5h-7z" fill="#cf8a45" /><path d="M7 1v22M17 1v22" stroke="#cf8a45" strokeWidth="1.200" strokeDasharray="1.500 1.500" /></Svg>
                  <span className="absolute right-px bottom-px border-b-4 border-l-4 border-b-[#1c1c1c] border-l-transparent" />
                </button>
              </div>

              <div className="flex h-[138px] shrink-0 border-y border-[#4e4e4e]">
                <section className="flex-1 border-l border-[#4e4e4e]">
                  <div className="flex h-[23px] items-center gap-[13px] border-b border-[#4e4e4e] pl-1.5">
                    <span className="-mr-[3px]"><Burger /></span>
                    <MenuItems items={[['Create', 'y'], ['Edit', 'y'], ['View'], ['Select'], ['Material'], ['Texture']]} />
                  </div>
                  <button type="button" className="mt-[3px] ml-[1px] flex w-[45px] flex-col border-2 border-[#4a4a4a] bg-[#585858] text-left text-[#d8d8d8]">
                    <svg width="41" height="43" viewBox="0 0 41 43" aria-hidden="true">
                      <defs>
                        <radialGradient id="ball" cx=".35" cy=".35" r=".7"><stop offset="0" stopColor="#c8cbce" /><stop offset="1" stopColor="#626a74" /></radialGradient>
                        <pattern id="hex" width="8" height="10" patternUnits="userSpaceOnUse"><circle cx="2" cy="2.500" r="2.200" fill="#4f565f" /><circle cx="6" cy="7.500" r="2.200" fill="#4f565f" /></pattern>
                      </defs>
                      <rect width="41" height="43" fill="#6c7279" />
                      {Array.from({ length: 16 }, (_, i) => <rect key={i} x={(i % 8) * 6} y={((i % 2) + Math.floor(i / 8) * 2) * 5} width="6" height="5" fill="#878b90" />)}
                      <path d="M0 26h41v17H0z" fill="#5a6876" /><path d="M0 30h41M0 34h41M0 38h41" stroke="#8695a5" strokeDasharray="8 3" />
                      <circle cx="19" cy="20" r="18" fill="url(#ball)" /><circle cx="19" cy="20" r="18" fill="url(#hex)" />
                      <path d="M4 43l6-4h24l5 4z" fill="#a0a8b0" />
                    </svg>
                    <span className="h-[14px] leading-[14px]">Mat</span>
                  </button>
                </section>
                <section className="mr-px w-[290px] border-r border-[#4e4e4e]">
                  <div className="mr-[2px] flex h-6 items-center justify-end border-b border-[#4e4e4e] pr-[53px]"><h2>Rotation</h2></div>
                  <div className="mt-1.5 flex flex-col gap-[3px] pr-[3px]">
                    {[['37 cm', 'H'], ['9 cm', 'P'], ['m', 'B']].map(([v, l]) => (
                      <div key={l} className="flex items-center justify-end">
                        <NumField label={`Size ${l}`} value={v} className="w-[69px]" />
                        <span className="w-[13px] pl-[2px]">{l}</span>
                        <NumField label={`Rotation ${l}`} value="0 °" className="w-[94px]" />
                      </div>
                    ))}
                  </div>
                  <div className="mt-[6px] flex items-center justify-end pr-[4px]">
                    <span className="relative mr-[15px]"><select aria-label="Size mode" className="h-[17px] w-20 appearance-none rounded-sm bg-[#474747]" defaultValue=""><option value=""></option></select><Chevron c="#7a7a7a" /></span>
                    <button type="button" className="h-[17px] w-[93px] rounded-sm bg-[#585858] text-[#d0d0d0]">Apply</button>
                  </div>
                </section>
              </div>
            </div>
          </div>

          <footer className="mt-[3px] flex h-6 shrink-0 items-center gap-[11px] border border-[#4e4e4e] pt-px pl-1"><Burger /><span>Extrude Selected [Shortcut M~T, D]</span></footer>
        </div>

        <div className="flex w-[516px] shrink-0 flex-col">
          <section className="flex h-[468px] shrink-0">
            <div className="flex min-w-0 flex-1 flex-col border border-r-0 border-[#4e4e4e]">
              <div className="flex h-[22px] shrink-0 items-center gap-[14px] pl-1.5">
                <span className="-mr-1"><Burger /></span>
                <MenuItems items={[['File'], ['Edit'], ['View', 'y'], ['Object'], ['Tags', 'y'], ['Bookmarks']]} />
                <div className="mr-[1px] ml-auto flex gap-[3px]">
                  <button type="button" aria-label="Search objects"><PickLens /></button>
                  <button type="button" aria-label="Home"><Svg size={17} box={17}><path d="M1 8.500L8.500 1 16 8.500h-3V15.500H4V8.500z" stroke="#8c8c8c" strokeWidth="1.300" /></Svg></button>
                  <button type="button" aria-label="Filter"><Svg size={17} box={17}><path d="M1.500 2h13l-5 7v5l-3 2V9z" stroke="#8c8c8c" strokeWidth="1.300" /></Svg></button>
                  <button type="button" aria-label="New panel"><PlusBox /></button>
                </div>
              </div>
              <div className="mr-[2px] flex min-h-0 flex-1 border-2 border-l-0 border-[#4a4a4a] pt-px">
                <ul className="w-[67px]">
                  <li className="flex h-[20px] items-center bg-[#484848]">
                    <svg width="31" height="20" fill="none" aria-hidden="true"><path d="M8.500 0v20M8.500 10.500h8" stroke="#858585" /><path d="M25 5l5 10H20z" fill="#7fc3ff" /><circle cx="25" cy="5" r="1.500" fill="#fff" /><circle cx="20" cy="15.500" r="1.500" fill="#fff" /><circle cx="30" cy="15.500" r="1.500" fill="#fff" /></svg>
                    <span className="ml-[5px] text-[#f0b93a]">Cube</span>
                  </li>
                  <li className="flex h-[21px] items-center">
                    <svg width="31" height="21" fill="none" aria-hidden="true"><path d="M8.500 0v7M4.500 7.500h8v8h-8zM6 11.500h5M8.500 9v5M12.500 11.500h4" stroke="#858585" /><path d="M20.500 4v12.500H30" stroke="#eee" strokeWidth="1.600" /><circle cx="26.500" cy="8" r="4" fill="#a9d4ff" /></svg>
                    <span className="ml-[5px] text-[#c8c8c8]">터널</span>
                  </li>
                </ul>
                <ul className="w-10 border-x border-[#4a4a4a]">
                  {['bg-[#858585]', 'bg-[#e85555]'].map((c, i) => (
                    <li key={c} className={`flex items-center gap-[5px] pl-[3px] ${i === 0 ? 'h-[20px] bg-[#484848]' : 'h-[21px]'}`}>
                      <Svg size={12} box={12}><rect width="12" height="12" rx="1.500" fill="#9a9a9a" /><path d="M2.500 9.500l7-7" stroke="#333" /></Svg>
                      <span className="flex flex-col gap-[3px]"><i className={`size-[5px] rounded-full ${c}`} /><i className={`size-[5px] rounded-full ${c}`} /></span>
                    </li>
                  ))}
                </ul>
                <div className="flex-1 border-l border-[#4a4a4a]">
                  <div className="flex h-[20px] items-start gap-1 bg-[#484848] pt-px pl-[2px]">
                    <Svg size={16} box={16}><circle cx="5" cy="5" r="3.600" fill="#c97a24" stroke="#5b3410" /><circle cx="11" cy="11" r="3.600" fill="#c97a24" stroke="#5b3410" /></Svg>
                    <Svg size={15} box={15}><rect x=".75" y=".75" width="13.500" height="13.500" fill="#111" stroke={O} strokeWidth="1.500" /><Checks x={2.5} y={2.5} s={2.5} n={4} /></Svg>
                  </div>
                </div>
              </div>
            </div>
            <Tabs items={['Objects', 'Takes', 'Content Browser']} />
          </section>

          <section className="mt-[4px] flex min-h-0 flex-1">
            <div className="flex min-w-0 flex-1 flex-col border-t border-l border-[#4e4e4e]">
              <div className="flex h-[23px] shrink-0 items-center gap-[14px] border-b border-[#4e4e4e] pl-1.5">
                <span className="-mr-1"><Burger /></span>
                <MenuItems items={[['Mode'], ['Edit'], ['User Data']]} />
                <div className="mr-[1px] ml-auto flex gap-[3px]">
                  <button type="button" aria-label="Back"><Svg size={17} box={17}><path d="M16 8.500H2M7 3L1.500 8.500 7 14" stroke="#a0a0a0" strokeWidth="1.800" /></Svg></button>
                  <button type="button" aria-label="Forward"><Svg size={17} box={17}><path d="M1 8.500h14M10 3l5.500 5.500L10 14" stroke="#555" strokeWidth="1.500" /></Svg></button>
                  <button type="button" aria-label="Up"><Svg size={17} box={17}><path d="M8.500 16V2M3 7l5.500-5.500L14 7" stroke="#555" strokeWidth="1.500" /></Svg></button>
                  <button type="button" aria-label="Search attributes"><PickLens /></button>
                  <button type="button" aria-label="Lock"><Svg size={17} box={17}><path d="M3 7.500h11v8H3zM5 7V5q0-3.500 3.500-3.500T12 5" stroke="#8c8c8c" strokeWidth="1.400" /><circle cx="8.500" cy="11.500" r="1.300" fill="#8c8c8c" /></Svg></button>
                  <button type="button" aria-label="Focus"><Svg size={17} box={17}><circle cx="8.500" cy="8.500" r="7" stroke="#8c8c8c" strokeWidth="1.200" /><circle cx="8.500" cy="8.500" r="2.600" stroke="#8c8c8c" strokeWidth="1.400" /></Svg></button>
                  <button type="button" aria-label="New manager"><PlusBox /></button>
                </div>
              </div>
              <div className="mt-[5px] flex items-center gap-[5px] pl-[3px]"><Svg size={20}><LoopPath /></Svg><span>Loop Selection</span></div>
              <h3 className="mt-[10px] ml-[5px] font-bold text-white">Options</h3>
              <div className="mt-[5px] flex w-[165px] flex-col gap-1 pl-[26px]">
                <label className="flex h-4 items-center justify-between">Stop at Boundary Edges<input type="checkbox" className={`${tick} border-[#9a9a9a]`} /></label>
                <label className="flex h-4 items-center justify-between"><span>Select Boundary Loop</span><span className="flex items-center gap-[7px]">.<input type="checkbox" className={`${tick} border-[#9a9a9a]`} /></span></label>
                <label className="flex h-4 items-center justify-between text-[#777]"><span>Greedy Search</span><span className="flex items-center gap-[7px]">. . . . . . . .<input type="checkbox" disabled className={`${tick} border-[#5c5c5c]`} /></span></label>
              </div>
            </div>
            <Tabs items={['Attributes', 'Layers', 'Structure']} />
          </section>
        </div>
      </div>

      <ContextMenu />
    </div>
  );
}
